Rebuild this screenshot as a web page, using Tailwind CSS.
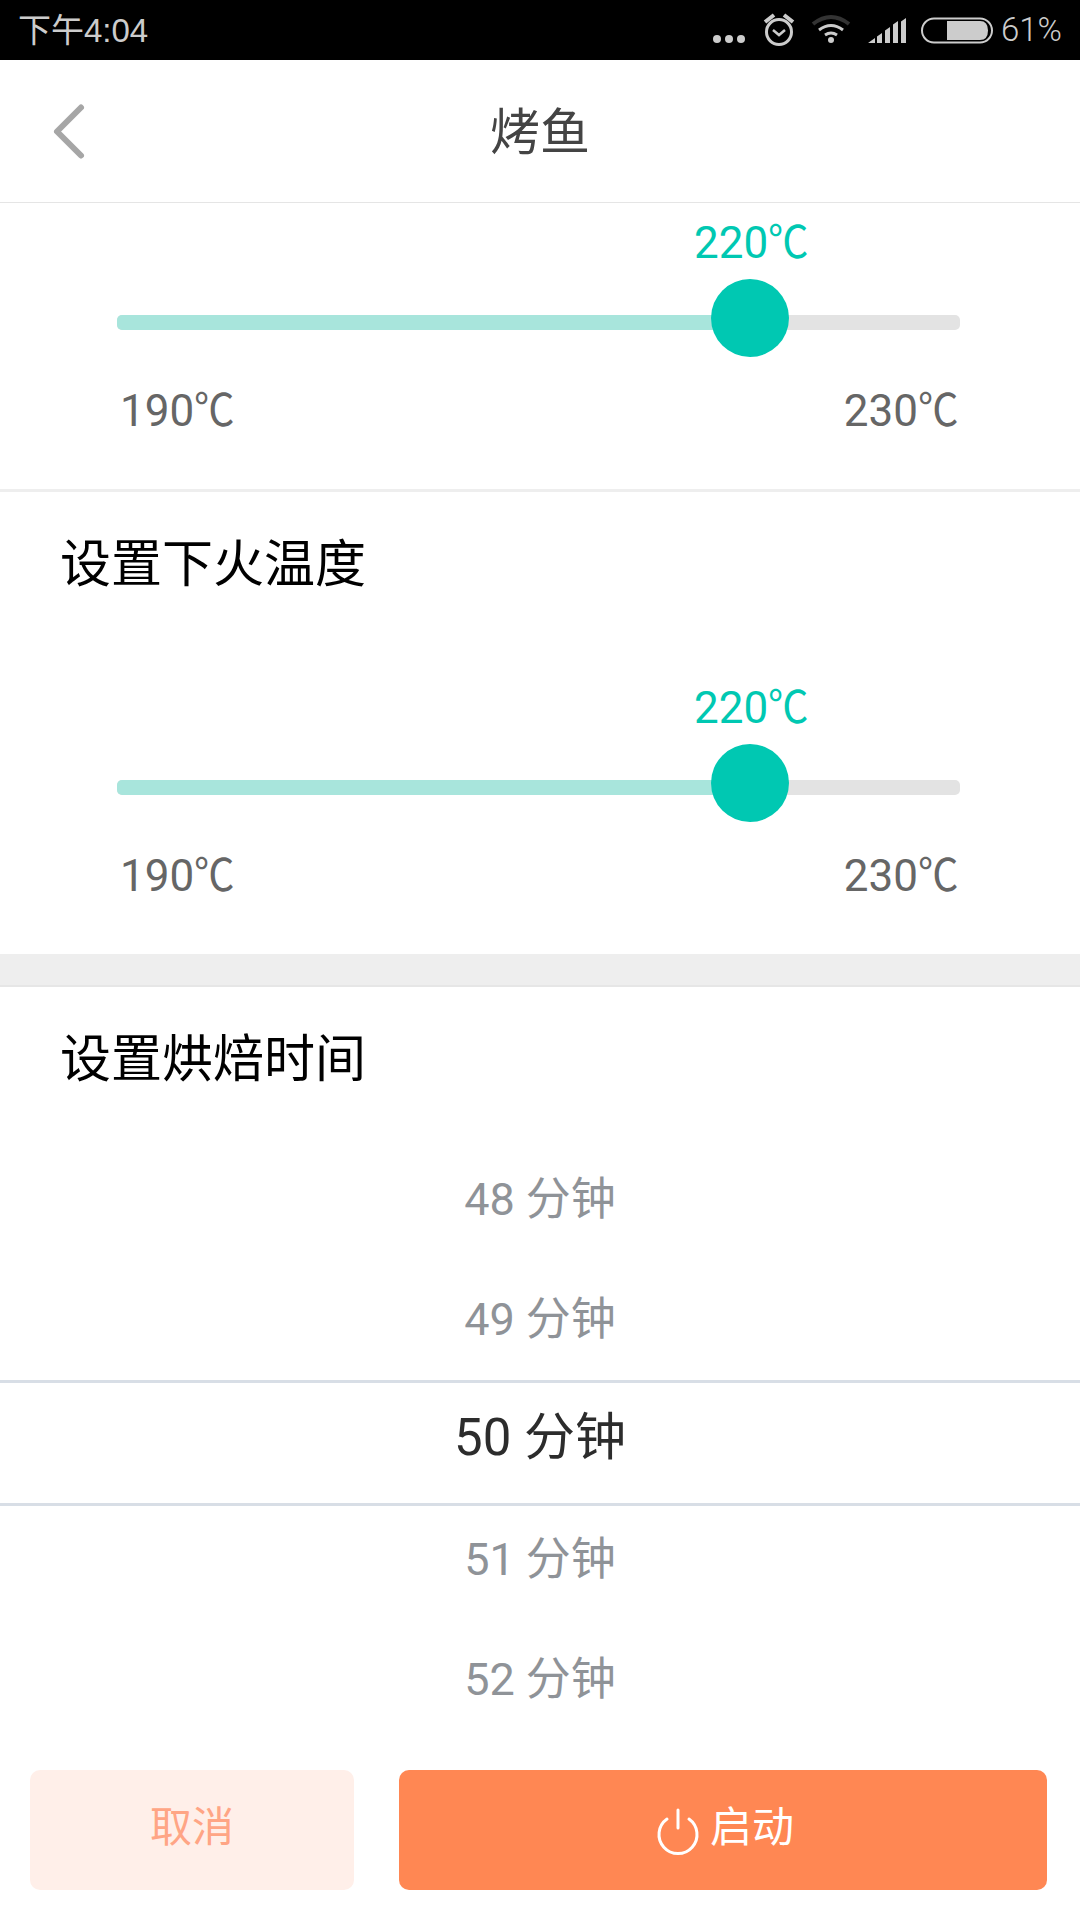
<!DOCTYPE html>
<html lang="zh-CN">
<head>
  <meta charset="UTF-8">
  <meta name="viewport" content="width=device-width, initial-scale=1">
  <title>烤鱼</title>
  <script src="https://cdn.jsdelivr.net/npm/@tailwindcss/browser@4"></script>
</head>
<body class="bg-white w-[1080px] h-[1920px] overflow-hidden font-['Roboto','Noto_Sans_CJK_SC',sans-serif]">

  <!-- Status bar -->
  <div class="bg-black h-[60px] flex items-center justify-between pl-[18px] pr-[18px] text-[#cccccc]">
    <span class="text-[33px] leading-[60px] pt-[1px] font-['Liberation_Sans','Noto_Sans_CJK_SC',sans-serif]">下午4:04</span>
    <div class="flex items-center">
      <svg width="320" height="60" viewBox="0 0 320 60" fill="none">
        <circle cx="41" cy="39" r="4" fill="#ccc"/><circle cx="53" cy="39" r="4" fill="#ccc"/><circle cx="65" cy="39" r="4" fill="#ccc"/>
        <circle cx="103" cy="32" r="12.5" stroke="#ccc" stroke-width="3"/>
        <path d="M97 30l6 5 6-5" stroke="#ccc" stroke-width="2.5"/>
        <path d="M89 22l9-7M117 22l-9-7" stroke="#ccc" stroke-width="4"/>
        <path d="M137 24q18-14 36 0" stroke="#333" stroke-width="4"/>
        <path d="M143 30q12-9 24 0" stroke="#ccc" stroke-width="3"/>
        <path d="M149 35q6-4 12 0" stroke="#ccc" stroke-width="3"/>
        <circle cx="155" cy="40" r="3" fill="#ccc"/>
        <path d="M192 43h7v-5l-7 5zM201 43h5v-10l-5 3.500zM209 43h5v-16l-5 3.500zM217 43h5v-22l-5 3.500zM225 43h5v-25l-5 3.500z" fill="#ccc"/>
        <rect x="246" y="18.500" width="70" height="24" rx="12" stroke="#ccc" stroke-width="2"/>
        <path d="M271 21h33q8 0 8 9.500t-8 9.500h-33z" fill="#ccc"/>
      </svg>
      <span class="text-[33px] leading-[60px] ml-[5px] font-['Roboto',sans-serif] font-light">61%</span>
    </div>
  </div>

  <!-- Nav -->
  <header class="relative h-[143px] border-b-[1px] border-[#e5e5e5] flex items-center justify-center">
    <svg class="absolute left-[50px] top-[42px]" width="40" height="60" viewBox="0 0 40 60" fill="none">
      <path d="M31 5.500L7 29.500l24 24" stroke="#a6a6a6" stroke-width="6" stroke-linecap="round" stroke-linejoin="round"/>
    </svg>
    <h1 class="pt-[4px] text-[50px] text-[#444444]">烤鱼</h1>
  </header>

  <!-- Upper temperature -->
  <section class="h-[289px] pt-[10px] border-b-[3px] border-[#eeeeee]">
    <div class="h-[60px] pl-[694px] flex items-center text-[44px] text-[#00c8b2] [font-feature-settings:'palt']">220<span class="inline-block w-[40px] origin-left scale-x-[0.92]">℃</span></div>
    <div class="relative h-[78px] mt-[6px] ml-[117px] mr-[120px]">
      <div class="absolute top-[36px] left-0 right-0 h-[15px] rounded-[5px] bg-[#e3e3e3] flex">
        <div class="w-[600px] rounded-l-[5px] bg-[#a8e5dc]"></div>
      </div>
      <div class="absolute left-[594px] top-0 w-[78px] h-[78px] rounded-full bg-[#00c8b2]"></div>
    </div>
    <div class="mt-[22px] pl-[120px] pr-[122px] flex justify-between text-[44px] leading-[64px] text-[#666666] [font-feature-settings:'palt']">
      <span>190<span class="inline-block w-[40px] origin-left scale-x-[0.92]">℃</span></span><span>230<span class="inline-block w-[40px] origin-left scale-x-[0.92]">℃</span></span>
    </div>
  </section>

  <!-- Lower temperature -->
  <section class="h-[462px]">
    <h2 class="pl-[60px] pt-[43px] text-[51px] leading-[60px] text-black">设置下火温度</h2>
    <div class="mt-[83px] h-[60px] pl-[694px] flex items-center text-[44px] text-[#00c8b2] [font-feature-settings:'palt']">220<span class="inline-block w-[40px] origin-left scale-x-[0.92]">℃</span></div>
    <div class="relative h-[78px] mt-[6px] ml-[117px] mr-[120px]">
      <div class="absolute top-[36px] left-0 right-0 h-[15px] rounded-[5px] bg-[#e3e3e3] flex">
        <div class="w-[600px] rounded-l-[5px] bg-[#a8e5dc]"></div>
      </div>
      <div class="absolute left-[594px] top-0 w-[78px] h-[78px] rounded-full bg-[#00c8b2]"></div>
    </div>
    <div class="mt-[22px] pl-[120px] pr-[122px] flex justify-between text-[44px] leading-[64px] text-[#666666] [font-feature-settings:'palt']">
      <span>190<span class="inline-block w-[40px] origin-left scale-x-[0.92]">℃</span></span><span>230<span class="inline-block w-[40px] origin-left scale-x-[0.92]">℃</span></span>
    </div>
  </section>

  <!-- Band -->
  <div class="h-[33px] bg-[#eeeeee] border-b-[2px] border-[#e6e6e6]"></div>

  <!-- Bake time -->
  <section>
    <h2 class="pl-[60px] pt-[43px] text-[51px] leading-[60px] text-black">设置烘焙时间</h2>
    <div class="relative mt-[48px] flex flex-col items-center">
      <div class="h-[120px] w-full pt-[4px] flex items-center justify-center text-[45px] text-[#8f9398]">48 分钟</div>
      <div class="h-[120px] w-full pt-[4px] flex items-center justify-center text-[45px] text-[#8f9398]">49 分钟</div>
      <div class="h-[120px] w-full flex items-center justify-center text-[51px] text-[#2c2c2c]">50 分钟</div>
      <div class="h-[120px] w-full pt-[4px] flex items-center justify-center text-[45px] text-[#8f9398]">51 分钟</div>
      <div class="h-[120px] w-full pt-[4px] flex items-center justify-center text-[45px] text-[#8f9398]">52 分钟</div>
      <!-- selection lines -->
      <div class="absolute left-0 right-0 top-[242px] h-[126px] border-y-[3px] border-[#d8dee6]"></div>
    </div>
  </section>

  <!-- Actions -->
  <footer class="fixed left-0 right-0 bottom-[30px] h-[120px] flex gap-[45px] pl-[30px] pr-[33px]">
    <button class="w-[324px] pb-[6px] rounded-[10px] bg-[#ffefe9] text-[#ffa585] text-[42px]">取消</button>
    <button class="flex-1 pl-[4px] rounded-[10px] bg-[#ff8753] text-white text-[42px] flex items-center justify-center gap-[10px]">
      <svg width="44" height="50" viewBox="0 0 44 50" fill="none" class="mt-[4px]">
        <path d="M11 12a19 19 0 1 0 22 0" stroke="#fff" stroke-width="3" stroke-linecap="round"/>
        <path d="M22 3v18" stroke="#fff" stroke-width="3" stroke-linecap="round"/>
      </svg>
      <span class="mb-[6px]">启动</span>
    </button>
  </footer>

</body>
</html>
